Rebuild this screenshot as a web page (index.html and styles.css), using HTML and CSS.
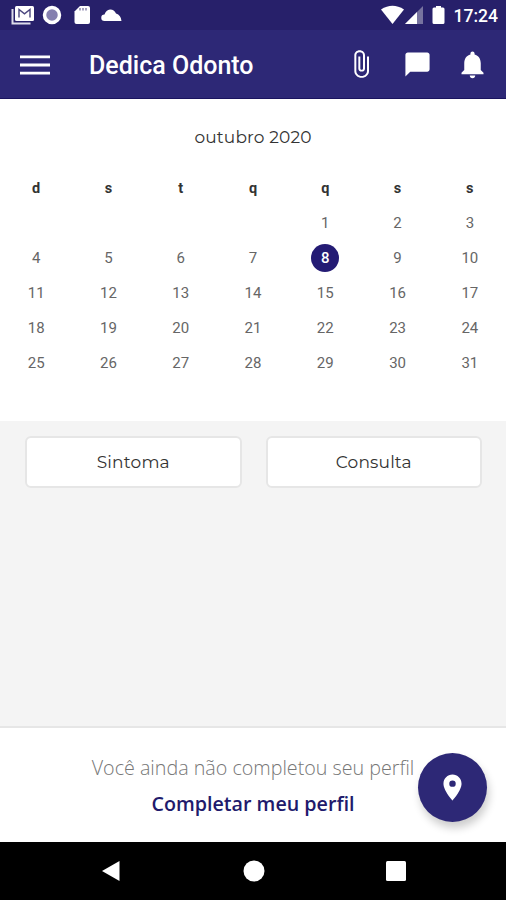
FILE: index.html
```html
<!DOCTYPE html>
<html lang="pt-BR">
<head>
  <meta charset="UTF-8" />
  <meta name="viewport" content="width=device-width, initial-scale=1.0"/>
  <title>Dedica Odonto</title>
  <link rel="stylesheet" href="styles.css">
</head>
<body>
  <div class="app">
    <div class="status-bar">
      <svg width="101" height="20" viewBox="0 0 101 20">
        <path d="M12.500 4v14.500h18" fill="none" stroke="#dddcea" stroke-width="2"/>
        <rect x="15" y="1" width="19" height="15" rx="1.500" fill="#fff"/>
        <path d="M19 12.500V4.500l5.500 4.300L30 4.500v8" fill="none" stroke="#4b477f" stroke-width="1.400"/>
        <circle cx="52" cy="10" r="7.500" fill="#8580af" stroke="#fff" stroke-width="3.500"/>
        <path d="M80 1h8q2 0 2 2v14q0 2-2 2H76.500q-2 0-2-2V6.500z" fill="#fff"/>
        <path d="M80 3v2.500M83 3v2.500M86 3v2.500" stroke="#77739f" stroke-width="1.300"/>
      </svg>
      <svg width="21" height="12" viewBox="0 0 21 12">
        <path d="M3.500 12a3.200 3.200 0 0 1 0-6.500Q5 1 9 .5q4-.2 6 4Q20 6 20.500 12z" fill="#fff"/>
      </svg>
      <svg class="status-right" width="66" height="20" viewBox="0 0 66 20">
        <path d="M0 4.500Q11.500-3 23 4.500L11.500 19z" fill="#fff"/>
        <path d="M42 1v18H24z" fill="#77739f"/>
        <path d="M36 7v12H24z" fill="#fff"/>
        <path d="M55 1h5v1.500h2q1.500 0 1.500 1.500v13.500q0 1.500-1.500 1.500h-9q-1.500 0-1.500-1.500V4q0-1.500 1.500-1.500h2z" fill="#fff"/>
      </svg>
      <span class="clock">17:24</span>
    </div>

    <header class="app-bar">
      <svg width="30" height="20" viewBox="0 0 30 20">
        <path d="M0 1.800h30M0 10h30M0 18.200h30" stroke="#fff" stroke-width="2.800"/>
      </svg>
      <h1>Dedica Odonto</h1>
      <div class="actions">
        <svg width="32" height="30" viewBox="0 0 24 24" preserveAspectRatio="none">
          <path fill="#fff" d="M16.500 6v11.500c0 2.210-1.790 4-4 4s-4-1.790-4-4V5a2.500 2.500 0 0 1 5 0v10.500c0 .55-.45 1-1 1s-1-.45-1-1V6H10v9.500a2.500 2.500 0 0 0 5 0V5c0-2.210-1.790-4-4-4S7 2.790 7 5v12.500c0 3.040 2.460 5.500 5.500 5.500s5.500-2.460 5.500-5.500V6h-1.500z"/>
        </svg>
        <svg class="chat" width="29" height="29" viewBox="0 0 24 24">
          <path fill="#fff" d="M20 2H4c-1.100 0-2 .9-2 2v18l4-4h14c1.100 0 2-.9 2-2V4c0-1.100-.9-2-2-2z"/>
        </svg>
        <svg width="33" height="33" viewBox="0 0 24 24">
          <path fill="#fff" d="M12 22c1.100 0 2-.9 2-2h-4c0 1.100.89 2 2 2zm6-6v-5c0-3.070-1.640-5.640-4.500-6.320V4c0-.83-.67-1.500-1.500-1.500s-1.500.67-1.500 1.500v.68C7.630 5.360 6 7.920 6 11v5l-2 2v1h16v-1l-2-2z"/>
        </svg>
      </div>
    </header>

    <section class="calendar">
      <h2>outubro 2020</h2>
      <div class="week weekdays">
        <span>d</span><span>s</span><span>t</span><span>q</span><span>q</span><span>s</span><span>s</span>
      </div>
      <div class="week days">
        <span class="first">1</span><span>2</span><span>3</span>
        <span>4</span><span>5</span><span>6</span><span>7</span><span class="today">8</span><span>9</span><span>10</span>
        <span>11</span><span>12</span><span>13</span><span>14</span><span>15</span><span>16</span><span>17</span>
        <span>18</span><span>19</span><span>20</span><span>21</span><span>22</span><span>23</span><span>24</span>
        <span>25</span><span>26</span><span>27</span><span>28</span><span>29</span><span>30</span><span>31</span>
      </div>
    </section>

    <main class="content">
      <button>Sintoma</button>
      <button>Consulta</button>
    </main>

    <footer class="profile">
      <p>Você ainda não completou seu perfil</p>
      <a>Completar meu perfil</a>
      <div class="fab">
        <svg width="31" height="31" viewBox="0 0 24 24">
          <path fill="#fff" d="M12 2C8.130 2 5 5.130 5 9c0 5.250 7 13 7 13s7-7.750 7-13c0-3.870-3.130-7-7-7zm0 9.500a2.500 2.500 0 0 1 0-5 2.500 2.500 0 0 1 0 5z"/>
        </svg>
      </div>
    </footer>

    <nav class="nav-bar">
      <svg width="20" height="22" viewBox="0 0 20 22"><path d="M1 11 18.500 1v20z" fill="#fff"/></svg>
      <svg width="22" height="22" viewBox="0 0 22 22"><circle cx="11" cy="11" r="10.500" fill="#fff"/></svg>
      <svg width="20" height="20" viewBox="0 0 20 20"><rect width="20" height="20" rx="1.500" fill="#fff"/></svg>
    </nav>
  </div>
</body>
</html>
```
FILE: styles.css
```css
* {
  box-sizing: border-box;
}

body {
  font-family: Roboto, sans-serif;
  margin: 0;
}

h1, h2, p {
  margin: 0;
}

svg {
  display: block;
  flex: none;
}

.app {
  display: flex;
  flex-direction: column;
  height: 900px;
  background: #f4f4f4;
}

.status-bar {
  display: flex;
  align-items: center;
  height: 30px;
  padding-right: 8px;
  background: #27206a;
  color: white;
}

.status-right {
  margin-left: auto;
}

.clock {
  width: 45px;
  margin-left: 6px;
  padding-top: 2px;
  font-size: 17.5px;
  font-weight: 500;
  text-align: right;
}

.app-bar {
  display: flex;
  align-items: center;
  height: 69px;
  padding: 2px 17px 0 20px;
  background: #2d2876;
  border-bottom: 1px solid #1a145f;
  color: white;
}

.app-bar h1 {
  margin-left: 39px;
  padding-top: 1px;
  font-size: 25px;
  font-weight: 500;
}

.actions {
  display: flex;
  align-items: center;
  gap: 24px;
  margin-left: auto;
  padding-bottom: 2px;
}

.chat {
  margin-left: 2px;
}

.calendar {
  height: 322px;
  padding-top: 25px;
  background: white;
}

.calendar h2 {
  font-family: Montserrat, sans-serif;
  font-size: 17px;
  font-weight: 400;
  line-height: 26px;
  letter-spacing: 0.15px;
  text-align: center;
  color: #333;
}

.week {
  display: grid;
  grid-template-columns: repeat(7, 1fr);
  justify-items: center;
  align-items: center;
}

.weekdays {
  margin-top: 25px;
  height: 26px;
  font-size: 14.5px;
  font-weight: 700;
  color: #333;
}

.days {
  margin-top: 4px;
  grid-auto-rows: 35.2px;
  font-size: 15px;
  color: #666;
}

.first {
  grid-column-start: 5;
}

.today {
  width: 28px;
  height: 28px;
  border-radius: 50%;
  background: #241b74;
  color: white;
  font-weight: 500;
  line-height: 28px;
  text-align: center;
}

.content {
  flex: 1;
  display: grid;
  grid-template-columns: 1fr 1fr;
  align-items: start;
  gap: 24px;
  padding: 15px 24px 0 25px;
}

.content button {
  height: 52px;
  background: white;
  border: 2px solid #e6e6e6;
  border-radius: 6px;
  font-family: Montserrat, sans-serif;
  font-size: 17px;
  letter-spacing: 0.2px;
  color: #333;
}

.profile {
  position: relative;
  display: flex;
  flex-direction: column;
  align-items: center;
  height: 116px;
  padding-top: 26px;
  background: white;
  border-top: 2px solid #e6e6e6;
  font-family: "Open Sans", sans-serif;
  font-size: 19.7px;
}

.profile p {
  line-height: 28px;
  font-weight: 300;
  color: #777;
}

.profile a {
  margin-top: 8px;
  line-height: 28px;
  font-weight: 600;
  color: #211a6c;
}

.fab {
  position: absolute;
  top: 25px;
  right: 19px;
  display: flex;
  align-items: center;
  justify-content: center;
  width: 69px;
  height: 69px;
  border-radius: 50%;
  background: #2d2876;
  box-shadow: 2px 6px 9px rgba(0, 0, 0, 0.2);
}

.nav-bar {
  display: flex;
  align-items: center;
  justify-content: space-between;
  height: 58px;
  padding: 0 100px 0 101px;
  background: black;
}
```
